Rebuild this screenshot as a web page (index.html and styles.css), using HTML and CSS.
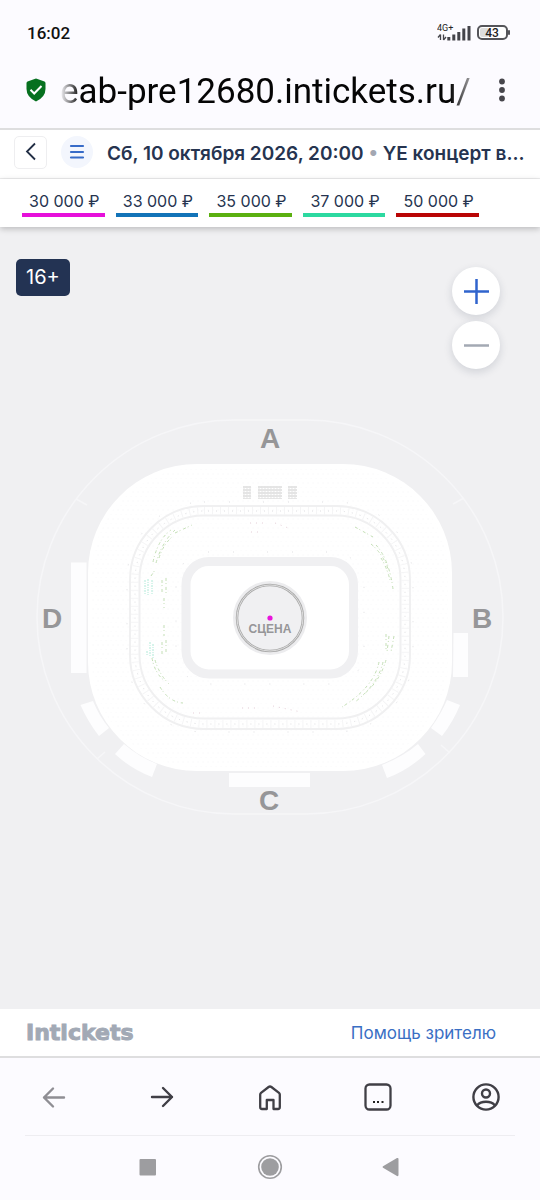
FILE: index.html
```html
<!DOCTYPE html>
<html lang="ru">
<head>
<meta charset="utf-8">
<meta name="viewport" content="width=device-width, initial-scale=1">
<title>YE концерт — Intickets</title>
<link rel="stylesheet" href="styles.css">
</head>
<body>
<div class="status">
  <span class="clock">16:02</span>
  <div class="indicators">
    <svg class="signal" width="35" height="20" viewBox="0 0 35 20" role="img" aria-label="4G+">
      <text x="0" y="8" class="signal-label">4G+</text>
      <path d="M3.500 11.500v5.500M1 14.500l2.500-3M6.500 11.500v5.500M6.500 17l2.500-3" stroke="#44444a" stroke-width="1.300" fill="none"/>
      <path d="M11.800 14v3.500M16.800 11.500v6M21.800 9v8.500M26.800 5.500v12M32 3v14.500" stroke="#44444a" stroke-width="3"/>
    </svg>
    <svg class="battery" width="36" height="18" viewBox="0 0 36 18" role="img" aria-label="43">
      <rect x="2" y="2" width="29" height="13" rx="4" fill="#fff" stroke="#55555a" stroke-width="2"/>
      <rect x="4" y="4" width="9" height="9" rx="2" fill="#ddd"/>
      <rect x="32" y="6" width="2" height="5" rx="1" fill="#55555a"/>
      <text x="16" y="13" text-anchor="middle" class="battery-label">43</text>
    </svg>
  </div>
</div>

<div class="address">
  <svg width="20" height="24" viewBox="0 0 20 24" role="img" aria-label="Защищено"><path d="M10 0.500 18.500 3.500Q19.500 4 19.500 5V11Q19.500 19 10 23.500Q0.500 19 0.500 11V5Q0.500 4 1.500 3.500Z" fill="#06701f"/><path d="m4.500 11.800 3.700 3.700 7.300-7.500" fill="none" stroke="#fff" stroke-width="2"/></svg>
  <input class="url" type="text" aria-label="Адрес" value="eab-pre12680.intickets.ru/">
  <button class="plain kebab" aria-label="Меню"><svg width="8" height="24" viewBox="0 0 8 24" fill="#47464c"><circle cx="4" cy="3.500" r="2.900"/><circle cx="4" cy="12" r="2.900"/><circle cx="4" cy="20.500" r="2.900"/></svg></button>
</div>

<header class="event">
  <button class="back" aria-label="Назад"><svg width="12" height="20" viewBox="0 0 12 20"><path d="M10 1.500 2 9.500 10 17.500" fill="none" stroke="#222e45" stroke-width="1.800"/></svg></button>
  <button class="menu" aria-label="Список"><svg width="16" height="16" viewBox="0 0 16 16"><path d="M2 2h12M2 8h12M2 13.500h12" stroke="#376bc8" stroke-width="2.200" stroke-linecap="round"/></svg></button>
  <h1 class="title">Сб, 10 октября 2026, 20:00 <span class="dot">•</span> YE концерт в...</h1>
</header>

<div class="prices">
  <div class="price-list">
    <button class="price pink">30 000 ₽</button>
    <button class="price blue">33 000 ₽</button>
    <button class="price green">35 000 ₽</button>
    <button class="price mint">37 000 ₽</button>
    <button class="price red">50 000 ₽</button>
  </div>
</div>

<main class="map">
  <svg class="arena" viewBox="0 227 540 782" role="img" aria-label="Схема зала">
    <defs>
      <pattern id="seats" width="5" height="9" patternUnits="userSpaceOnUse"><path d="M1 1v1M3 5v2" stroke="#fafafb" stroke-width="1"/></pattern>
      <pattern id="rows" width="3" height="3" patternUnits="userSpaceOnUse"><path d="M0 1h3" stroke="#ccc"/><path d="M1 0v3" stroke="#e3e3e3"/></pattern>
    </defs>
    <rect x="37" y="420" width="466" height="394" rx="197" class="rim"/>
    <path d="m76 499 11 6M97 759l8-7M464 498l-11 6M450 753l-9-8" class="rim"/>
    <g fill="#fdfdfe">
      <path d="M71 562.500h15.500v110.500H71zM453.500 633H468v44h-15zM229 773h81v14h-81z"/>
      <path d="M80.500 705 93 701Q99 716 109 728L99 736Q88 722 80.500 705ZM115 754 124 744Q139 757 157 764L152 777Q131 769 115 754ZM447 700 460 705Q453 722 442 736L431 728Q441 714 447 700ZM418 744 425.500 754Q407 771 387 778L382 765Q404 756 418 744Z"/>
    </g>
    <rect x="88" y="464" width="364" height="307" rx="109" fill="#fff"/>
    <rect x="92" y="468" width="356" height="299" rx="105" fill="url(#seats)"/>
    <g fill="none" stroke="#f0f0f1" stroke-width="2">
      <rect x="130" y="506" width="280" height="223" rx="74"/>
      <rect x="139.500" y="515.500" width="261" height="203" rx="64"/>
    </g>
    <rect x="135" y="511" width="270" height="213" rx="69" fill="none" stroke="#f5f5f6" stroke-width="8" stroke-dasharray="1 7"/>
    <rect x="135" y="511" width="270" height="213" rx="69" fill="none" stroke="#dedee1" stroke-width="1" stroke-dasharray="1 7" stroke-dashoffset="4"/>
    <rect x="127" y="502" width="286" height="230" rx="77" class="specks"/>
    <rect x="176" y="552" width="188" height="132" rx="32" class="specks"/>
    <path d="M243 486h8v13h-8zM258 486h12v13h-12zM270 486h12v13h-12zM288 486h9v13h-9z" fill="url(#rows)"/>
    <g fill="none" stroke-width="1" class="free">
      <path d="M153 562Q158 539 171 530M156 563Q162 542 175 530M159 558Q163 545 172 537M175 533l17-8M151 576l4-6M162 580v12M166 578v17M164 598v10M164 625v11M162 642v13M166 640v12M152 658q3 16 13 23M155 660q4 14 14 24M160 687q9 15 23 16M355 527l18 10M371 544q12 10 17 25M376 545q13 14 17 44M381 558q6 10 9 22M386 634v18M389 636l-2 16M394 636l-3 16M379 662q-5 25-37 45M383 662q-5 22-28 40M386 660q-6 21-22 34" stroke="#c4dfb6" stroke-dasharray="3 2 1 3"/>
      <path d="M145 580v15M148 579v16M152 580v14M150 642v14M153 644v14M147 651v4" stroke="#b0ead8" stroke-dasharray="2 1 1 1"/>
      <path d="M250 523h14M251 532h12M275 523l16 6M242 708h16M273 706l28 6M193 713h12" stroke="#e5cfd8" stroke-dasharray="1 5"/>
    </g>
    <rect x="186" y="561.500" width="167.500" height="112.500" rx="23" fill="#fff" stroke="#f0f0f2" stroke-width="9"/>
    <circle cx="270" cy="618" r="37" fill="#ececee"/>
    <circle cx="270" cy="618" r="33" fill="#f0f0f2" stroke="#aaa" stroke-width="2.500"/>
    <circle cx="270" cy="618" r="33" fill="none" stroke="#ddd" stroke-width="1"/>
    <circle cx="270" cy="618" r="2.600" fill="#e815db"/>
    <g class="labels" text-anchor="middle">
      <text x="270" y="448">A</text>
      <text x="482" y="628">B</text>
      <text x="269" y="810">C</text>
      <text x="52" y="628">D</text>
      <text x="270" y="633" class="stage">СЦЕНА</text>
    </g>
  </svg>
  <span class="age">16+</span>
  <div class="zoom">
    <button class="round" aria-label="Приблизить"><svg width="26" height="26" viewBox="0 0 26 26"><path d="M13.500 1v25M1 13.500h25" stroke="#3064cd" stroke-width="2.500"/></svg></button>
    <button class="round" aria-label="Отдалить"><svg width="26" height="26" viewBox="0 0 26 26"><path d="M1 13.500h25" stroke="#a3a9b3" stroke-width="2.500"/></svg></button>
  </div>
</main>

<footer class="footer">
  <a class="logo" href="#">Intickets</a>
  <a class="help" href="#">Помощь зрителю</a>
</footer>

<nav class="toolbar" aria-label="Браузер">
  <button class="plain" aria-label="Назад"><svg width="30" height="30" viewBox="0 0 30 30" fill="none" stroke="#8f8e94" stroke-width="2.400" stroke-linecap="round" stroke-linejoin="round"><path d="M25 15.500H5M14 6.500l-9 9 9 9"/></svg></button>
  <button class="plain" aria-label="Вперёд"><svg width="30" height="30" viewBox="0 0 30 30" fill="none" stroke="#403f46" stroke-width="2.400" stroke-linecap="round" stroke-linejoin="round"><path d="M5 15h20M16 6l9 9-9 9"/></svg></button>
  <button class="plain" aria-label="Домой"><svg width="30" height="30" viewBox="0 0 30 30" fill="none" stroke="#403f46" stroke-width="2.300" stroke-linejoin="round"><path d="M5.200 12.500Q5.200 11.500 6 10.800L13.600 5Q15 4 16.400 5L24 10.800Q24.800 11.500 24.800 12.500V25Q24.800 27 23 27H18.500V18H11.800V27H7Q5.200 27 5.200 25Z"/></svg></button>
  <button class="plain" aria-label="Вкладки"><svg width="30" height="30" viewBox="0 0 30 30"><rect x="2.500" y="2.500" width="25" height="25" rx="4" fill="none" stroke="#403f46" stroke-width="2.300"/><path d="M10 20h2M14 20h2M18.500 20h2" stroke="#222" stroke-width="2"/></svg></button>
  <button class="plain" aria-label="Профиль"><svg width="30" height="30" viewBox="0 0 30 30" fill="none" stroke="#403f46" stroke-width="2.400"><circle cx="15" cy="15" r="12.600"/><circle cx="15" cy="11.500" r="4"/><path d="M6 23.500Q9 19.800 15 19.800T24 23.500"/></svg></button>
</nav>

<nav class="system" aria-label="Система">
  <button class="plain" aria-label="Недавние"><svg width="28" height="28" viewBox="0 0 28 28"><rect x="5.500" y="6" width="16.500" height="16.500" rx="1" fill="#9d9da0"/></svg></button>
  <button class="plain" aria-label="Главный экран"><svg width="28" height="28" viewBox="0 0 28 28"><circle cx="14" cy="14" r="11.300" fill="none" stroke="#9d9da0" stroke-width="1.600"/><circle cx="14" cy="14" r="8.800" fill="#9d9da0"/></svg></button>
  <button class="plain" aria-label="Назад"><svg width="28" height="28" viewBox="0 0 28 28"><path d="M5 13.200Q4 14 5 14.800L19 23Q20.500 23.500 20.500 22V6Q20.500 4.500 19 5Z" fill="#9d9da0"/></svg></button>
</nav>
</body>
</html>
```
FILE: styles.css
```css
* { box-sizing: border-box; }

body {
  margin: 0;
  min-height: 100vh;
  display: flex;
  flex-direction: column;
  background: #fcfbff;
  color: #263450;
  font-family: Inter, Roboto, sans-serif;
}

button { font: inherit; color: inherit; margin: 0; padding: 0; border: 0; cursor: pointer; }
svg { display: block; }

.plain { background: none; display: grid; place-items: center; }

.status {
  height: 60px;
  padding: 6px 28px 0 27px;
  display: flex;
  align-items: center;
  justify-content: space-between;
  font-family: Roboto, sans-serif;
  color: #111;
}
.clock { font-size: 17px; font-weight: 500; }
.indicators { display: flex; align-items: center; gap: 4px; }
.signal-label { font: 9px Roboto, sans-serif; fill: #222; }
.battery-label { font: 500 12px Roboto, sans-serif; fill: #222; }

.address {
  height: 70px;
  padding: 0 34px 8px 26px;
  display: flex;
  align-items: center;
  border-bottom: 2px solid #dededf;
}
.url {
  flex: 1;
  min-width: 0;
  height: 50px;
  margin: 0 28px 0 14px;
  padding: 2px 0 0;
  border: 0;
  outline: 0;
  background: none;
  font: 35px Roboto, sans-serif;
  color: #050505;
  text-align: right;
  -webkit-mask-image: linear-gradient(to right, transparent, #000 20px, #000 calc(100% - 20px), rgba(0, 0, 0, 0.4));
  mask-image: linear-gradient(to right, transparent, #000 20px, #000 calc(100% - 20px), rgba(0, 0, 0, 0.4));
}

.event {
  height: 49px;
  padding: 0 10px 4px 14px;
  display: flex;
  align-items: center;
  background: #fff;
  border-bottom: 1px solid #ededee;
}
.back {
  flex: none;
  width: 33px;
  height: 33px;
  display: grid;
  place-items: center;
  background: #fff;
  border: 1px solid #eeeef0;
  border-radius: 5px;
}
.menu {
  flex: none;
  width: 32px;
  height: 32px;
  margin: 0 14px;
  display: grid;
  place-items: center;
  background: #f3f6fd;
  border-radius: 50%;
}
.title {
  margin: 0;
  padding-top: 3px;
  font-size: 19px;
  line-height: 24px;
  font-weight: 600;
  white-space: nowrap;
  overflow: hidden;
}
.dot { color: #a3a7b2; }

.prices {
  height: 48px;
  padding: 12px 22px 9px;
  background: #fff;
  box-shadow: 0 2px 6px rgba(0, 0, 0, 0.22);
  z-index: 1;
}
.price-list {
  max-width: 457px;
  display: grid;
  grid-template-columns: repeat(5, 1fr);
  gap: 11px;
}
.price {
  padding: 0 0 1px 2px;
  display: flex;
  justify-content: center;
  background: none;
  border-bottom: 4px solid;
  font-size: 16px;
  line-height: 21px;
  white-space: nowrap;
}
.pink { border-color: #e60fda; }
.blue { border-color: #1273b8; }
.green { border-color: #5bb010; }
.mint { border-color: #2cd9a0; }
.red { border-color: #b90505; }

.map {
  position: relative;
  flex: 1;
  background: #f0f0f2;
  display: flex;
}
.arena { width: 100%; }
.rim { fill: none; stroke: #f6f6f8; stroke-width: 1.5; }
.specks { fill: none; stroke: #dfdfe2; stroke-width: 1; stroke-dasharray: 1 24 1 33; }
.labels { font: bold 28px "Liberation Sans", sans-serif; fill: #969698; }
.stage { font-size: 12px; }

.age {
  position: absolute;
  left: 16px;
  top: 32px;
  padding: 0 10px;
  background: #233353;
  color: #fff;
  border-radius: 5px;
  font-size: 20px;
  line-height: 37px;
}
.zoom {
  position: absolute;
  right: 40px;
  top: 40px;
  display: grid;
  gap: 6px;
}
.round {
  width: 48px;
  height: 48px;
  display: grid;
  place-items: center;
  background: #fff;
  border-radius: 50%;
  box-shadow: 0 3px 8px rgba(30, 40, 70, 0.15);
}

.footer {
  height: 49px;
  padding: 0 44px 0 26px;
  display: flex;
  align-items: center;
  justify-content: space-between;
  background: #fff;
  border-bottom: 2px solid #dededf;
}
.footer a { text-decoration: none; }
.logo {
  font-family: "DejaVu Sans", sans-serif;
  font-size: 22px;
  font-weight: bold;
  color: #a2a9b5;
  -webkit-text-stroke: 1px #a2a9b5;
}
.help { font-size: 17px; color: #3a6fc4; }

.toolbar {
  height: 77px;
  display: grid;
  grid-template-columns: repeat(5, 1fr);
  align-items: center;
}
.system {
  height: 65px;
  margin: 0 25px;
  padding: 0 62px 2px;
  display: grid;
  grid-template-columns: repeat(3, 1fr);
  align-items: center;
  border-top: 1px solid #eeedf1;
}
```
